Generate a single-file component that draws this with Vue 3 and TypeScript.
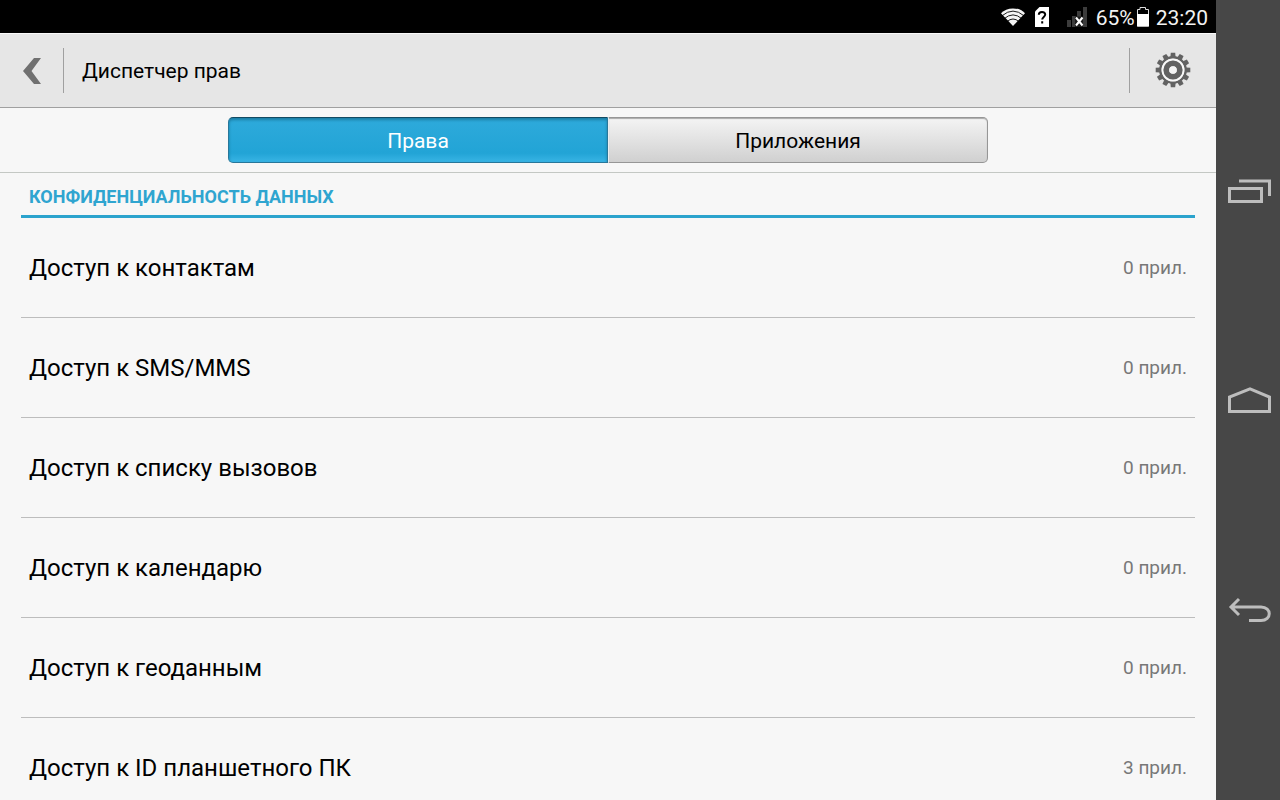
<script setup lang="ts">
import { ref } from 'vue'

interface Permission {
  title: string
  count: number
}

const tabs: string[] = ['Права', 'Приложения']
const active = ref(0)

const permissions: Permission[] = [
  { title: 'Доступ к контактам', count: 0 },
  { title: 'Доступ к SMS/MMS', count: 0 },
  { title: 'Доступ к списку вызовов', count: 0 },
  { title: 'Доступ к календарю', count: 0 },
  { title: 'Доступ к геоданным', count: 0 },
  { title: 'Доступ к ID планшетного ПК', count: 3 },
]

const teeth: number[] = Array.from({ length: 12 }, (_, i) => i * 30)
</script>

<template>
  <div class="device">
    <div class="screen">
      <div class="status">
        <svg class="wifi" width="26" height="20" viewBox="0 0 26 20" aria-hidden="true">
          <path d="M13 19 1 6.200C4 3 8 1.400 13 1.400S22 3 25 6.200Z" fill="#f4f4f4" />
          <g fill="none" stroke="#000" stroke-width="0.900">
            <path d="M2 8.800Q13-.6 24 8.800" />
            <path d="M4 11.800Q13 4 22 11.800" />
            <path d="M7 14.600Q13 9.400 19 14.600" />
          </g>
        </svg>
        <svg class="sim" width="16" height="20" viewBox="0 0 16 20" aria-hidden="true">
          <path d="M5.500 0H15V20H1V4.500Z" fill="#fff" />
          <path d="M4.800 7.800C4.800 4 11.200 4 11.200 7.600C11.200 10 8.200 10 8.200 12.600M8.200 14.200V16.400" fill="none" stroke="#000" stroke-width="2" />
        </svg>
        <svg class="signal" width="22" height="20" viewBox="0 0 22 20" aria-hidden="true">
          <path d="M1 13H5V20H1ZM6 9H10V20H6ZM11 4H15V20H11ZM17 0H21V20H17Z" fill="#3c3c3c" />
          <path d="M9 9.500H17V20H9Z" fill="#1c1c1c" />
          <path d="M10 10.500 16.500 18.500M16.500 10.500 10 18.500" stroke="#fff" stroke-width="2" />
        </svg>
        <span>65%</span>
        <svg class="battery" width="15" height="20" viewBox="0 0 15 20" aria-hidden="true">
          <path d="M2.500 19V2.500H5V.5H10.500V2.500H13.500V19Z" fill="#000" stroke="#ddd" />
          <path d="M2 7H14V19.500H2Z" fill="#fff" />
        </svg>
        <span>23:20</span>
      </div>

      <header class="bar">
        <button class="back" type="button" aria-label="Назад">
          <svg width="20" height="28" viewBox="0 0 20 28" aria-hidden="true">
            <path d="M12 1H19L9.500 14 19 27H12L1 14Z" fill="#707070" />
          </svg>
        </button>
        <h1>Диспетчер прав</h1>
        <button class="settings" type="button" aria-label="Настройки">
          <svg width="36" height="36" viewBox="-18 -18 36 36" aria-hidden="true">
            <g fill="#626262">
              <path v-for="a in teeth" :key="a" d="M-2.600-13-2.200-17.300H2.200L2.600-13Z" :transform="`rotate(${a})`" />
            </g>
            <circle r="12.600" fill="none" stroke="#626262" stroke-width="2.600" />
            <circle r="10.500" fill="none" stroke="#f8f8f8" stroke-width="2" />
            <circle r="6.700" fill="none" stroke="#626262" stroke-width="5.800" />
            <circle r="3.800" fill="#f4f4f4" />
          </svg>
        </button>
      </header>

      <div class="switcher">
        <div class="tabs" role="tablist">
          <button
            v-for="(tab, i) in tabs"
            :key="tab"
            type="button"
            role="tab"
            class="tab"
            :class="{ selected: active === i }"
            :aria-selected="active === i"
            @click="active = i"
          >
            {{ tab }}
          </button>
        </div>
      </div>

      <main class="content">
        <h2>КОНФИДЕНЦИАЛЬНОСТЬ ДАННЫХ</h2>
        <ul>
          <li v-for="p in permissions" :key="p.title">
            <button class="row" type="button">
              <span class="title">{{ p.title }}</span>
              <span class="count">{{ p.count }} прил.</span>
            </button>
          </li>
        </ul>
      </main>
    </div>

    <nav class="keys">
      <button type="button" aria-label="Недавние приложения">
        <svg width="44" height="26" viewBox="0 0 44 26" aria-hidden="true">
          <path d="M2.500 10.500H34.500V23.500H2.500ZM12 3H42.500V18" />
        </svg>
      </button>
      <button type="button" aria-label="Главный экран">
        <svg width="44" height="26" viewBox="0 0 44 26" aria-hidden="true">
          <path d="M2.500 24.500V10L23 1.800 42.500 10V24.500Z" />
        </svg>
      </button>
      <button type="button" aria-label="Назад">
        <svg width="44" height="26" viewBox="0 0 44 26" aria-hidden="true">
          <path d="M4 11H34C45 11 45 24.500 34 24.500H22M12 3 4 11 12 19" />
        </svg>
      </button>
    </nav>
  </div>
</template>

<style>
body {
  margin: 0;
}
</style>

<style scoped>
.device {
  display: flex;
  height: 100vh;
  overflow: hidden;
  background: #f7f7f7;
  color: #000;
  font-family: Roboto, 'Noto Sans', sans-serif;
}

button {
  margin: 0;
  padding: 0;
  border: 0;
  background: none;
  color: inherit;
  font: inherit;
  cursor: pointer;
}

svg {
  display: block;
}

h1,
h2,
ul {
  margin: 0;
  padding: 0;
  list-style: none;
}

.screen {
  display: flex;
  flex: 1;
  flex-direction: column;
  min-width: 0;
}

.status {
  display: flex;
  flex: none;
  align-items: center;
  justify-content: flex-end;
  box-sizing: border-box;
  height: 33px;
  padding-right: 8px;
  background: #000;
  color: #f2f2f2;
  font-size: 21px;
  line-height: 28px;
}

.status span {
  padding-top: 3px;
}

.wifi {
  margin-right: 8px;
}

.sim {
  margin-right: 16px;
}

.signal {
  margin-right: 8px;
}

.battery {
  margin-right: 6px;
}

.bar {
  display: flex;
  flex: none;
  align-items: center;
  box-sizing: border-box;
  height: 75px;
  border-top: 1px solid #fafafa;
  border-bottom: 1px solid #a0a0a0;
  background: #e6e6e6;
}

.bar h1 {
  flex: 1;
  padding-left: 18px;
  font-size: 21px;
  font-weight: 400;
  line-height: 28px;
}

.back,
.settings {
  display: flex;
  align-items: center;
  height: 45px;
}

.back {
  width: 64px;
  padding-left: 22px;
  border-right: 1px solid #a0a0a0;
}

.settings {
  justify-content: center;
  width: 87px;
  padding-bottom: 2px;
  border-left: 1px solid #a0a0a0;
}

.switcher {
  flex: none;
  padding: 9px 0;
  border-bottom: 1px solid #c4c8c4;
}

.tabs {
  display: flex;
  width: 62.5%;
  height: 46px;
  margin: 0 auto;
}

.tab {
  flex: 1;
  padding-top: 2px;
  border: 1px solid #969696;
  background: linear-gradient(#f4f4f4, #d0d0d0);
  box-shadow: inset 0 1px 1px #aaa;
  font-size: 21px;
}

.tab:first-child {
  border-radius: 5px 0 0 5px;
}

.tab:last-child {
  border-left-color: #e8eef0;
  border-radius: 0 5px 5px 0;
}

.tab.selected {
  border-color: #28779a;
  border-top-color: #124a62;
  background: linear-gradient(#2eaadb, #22a4d6 80%, #38b4e4);
  box-shadow: inset 0 2px 3px #1a7ca3;
  color: #fff;
}

.content {
  flex: 1;
  min-height: 0;
  padding: 0 21px;
  overflow-y: auto;
  scrollbar-width: none;
}

h2 {
  padding: 10px 8px 5px;
  border-bottom: 3px solid #2ba3cd;
  color: #2fa5d0;
  font-size: 18px;
  font-weight: 700;
  line-height: 27px;
}

.row {
  display: flex;
  align-items: center;
  justify-content: space-between;
  box-sizing: border-box;
  width: 100%;
  height: 100px;
  padding: 0 8px;
  border-bottom: 1px solid #bdbdbd;
  text-align: left;
}

.title {
  font-size: 24px;
}

.count {
  color: #787878;
  font-size: 19px;
}

.keys {
  display: flex;
  flex: none;
  flex-direction: column;
  justify-content: center;
  width: 64px;
  background: #474747;
}

.keys button {
  display: flex;
  align-items: center;
  justify-content: center;
  height: 209px;
  padding-left: 2px;
}

.keys path {
  fill: none;
  stroke: #bdbdbd;
  stroke-width: 3;
}
</style>
